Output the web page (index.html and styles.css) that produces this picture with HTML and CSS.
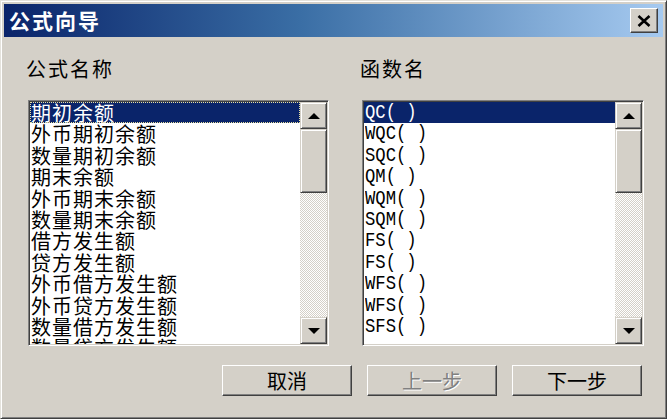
FILE: index.html
```html
<!DOCTYPE html>
<html lang="zh-CN">
<head>
  <meta charset="UTF-8" />
  <title>公式向导</title>
  <link rel="stylesheet" href="styles.css">
</head>
<body>
<div class="window">
  <div class="titlebar">
    <span class="title">公式向导</span>
    <button class="close-btn">
      <svg width="14" height="12" viewBox="0 0 14 12"><path d="M1.5 1 L12.5 11 M12.5 1 L1.5 11" stroke="#000" stroke-width="2.6" fill="none"/></svg>
    </button>
  </div>

  <div class="content">
    <div class="columns">
      <!-- 公式名称 -->
      <div class="group">
        <div class="label">公式名称</div>
        <div class="listbox">
          <ul class="items names">
            <li class="selected focused">期初余额</li>
            <li>外币期初余额</li>
            <li>数量期初余额</li>
            <li>期末余额</li>
            <li>外币期末余额</li>
            <li>数量期末余额</li>
            <li>借方发生额</li>
            <li>贷方发生额</li>
            <li>外币借方发生额</li>
            <li>外币贷方发生额</li>
            <li>数量借方发生额</li>
            <li>数量贷方发生额</li>
          </ul>
          <div class="scrollbar">
            <div class="sb-btn"><span class="arrow-up"></span></div>
            <div class="sb-thumb"></div>
            <div class="sb-track"></div>
            <div class="sb-btn"><span class="arrow-down"></span></div>
          </div>
        </div>
      </div>

      <!-- 函数名 -->
      <div class="group">
        <div class="label">函数名</div>
        <div class="listbox">
          <ul class="items funcs">
            <li class="selected"><span>QC( )</span></li>
            <li><span>WQC( )</span></li>
            <li><span>SQC( )</span></li>
            <li><span>QM( )</span></li>
            <li><span>WQM( )</span></li>
            <li><span>SQM( )</span></li>
            <li><span>FS( )</span></li>
            <li><span>FS( )</span></li>
            <li><span>WFS( )</span></li>
            <li><span>WFS( )</span></li>
            <li><span>SFS( )</span></li>
          </ul>
          <div class="scrollbar">
            <div class="sb-btn"><span class="arrow-up"></span></div>
            <div class="sb-thumb"></div>
            <div class="sb-track"></div>
            <div class="sb-btn"><span class="arrow-down"></span></div>
          </div>
        </div>
      </div>
    </div>

    <div class="buttons">
      <button class="btn">取消</button>
      <button class="btn" disabled>上一步</button>
      <button class="btn">下一步</button>
    </div>
  </div>
</div>
</body>
</html>
```

FILE: styles.css
```css
/* Reset */
* {
  margin: 0;
  padding: 0;
  box-sizing: border-box;
}

html, body {
  width: 667px;
  height: 419px;
  overflow: hidden;
  background: #d4d0c8;
  font-family: "Noto Sans CJK SC", "Noto Sans", sans-serif;
}

/* window frame, classic style */
.window {
  width: 667px;
  height: 419px;
  display: flex;
  flex-direction: column;
  background: #d4d0c8;
  border: 1px solid;
  border-color: #e4e2dc #404040 #404040 #e4e2dc;
  box-shadow: inset 1px 1px #fff, inset -1px -1px #808080;
  padding: 3px 3px 3px 3px;
}

.titlebar {
  height: 33px;
  display: flex;
  align-items: center;
  justify-content: space-between;
  padding: 0 5px 0 5px;
  background: linear-gradient(to right, #0a246a 0%, #3a6ea5 45%, #a6caf0 100%);
}

.title {
  color: #fff;
  font-size: 21px;
  font-weight: bold;
  letter-spacing: 2px;
  line-height: 33px;
}

.close-btn {
  width: 28px;
  height: 25px;
  display: flex;
  align-items: center;
  justify-content: center;
  background: #d4d0c8;
  border: 1px solid;
  border-color: #fff #404040 #404040 #fff;
  box-shadow: inset -1px -1px #808080;
}

.content {
  flex: 1;
  padding: 20px 19px 0 24px;
}

.columns {
  display: grid;
  grid-template-columns: 301px 282px;
  column-gap: 33px;
}

.label {
  font-size: 20px;
  letter-spacing: 2px;
  line-height: 24px;
  margin-left: -2px;
  margin-bottom: 19px;
  color: #000;
}

/* sunken list box */
.listbox {
  height: 246px;
  display: flex;
  background: #fff;
  border: 1px solid;
  border-color: #808080 #fff #fff #808080;
  box-shadow: inset 1px 1px #404040, inset -1px -1px #d4d0c8;
  padding: 1px;
}

.items {
  flex: 1;
  list-style: none;
  overflow: hidden;
  background: #fff;
}

.items li {
  height: 21.4px;
  line-height: 21.4px;
  padding-left: 1px;
  white-space: nowrap;
  color: #000;
}

.names li {
  font-size: 20px;
  letter-spacing: 1px;
}

.funcs li {
  font-family: "Liberation Mono", monospace;
  font-size: 21px;
}

.funcs li span {
  display: inline-block;
  transform: scaleX(0.82);
  transform-origin: left center;
}

.items li.selected {
  background: #0a246a;
  color: #fff;
}

.items li.focused {
  outline: 1px dotted #e8e0a0;
  outline-offset: -1px;
}

/* scrollbar */
.scrollbar {
  width: 27px;
  display: flex;
  flex-direction: column;
}

.sb-btn, .sb-thumb {
  background: #d4d0c8;
  border: 1px solid;
  border-color: #d4d0c8 #404040 #404040 #d4d0c8;
  box-shadow: inset 1px 1px #fff, inset -1px -1px #808080;
}

.sb-btn {
  height: 27px;
  display: flex;
  align-items: center;
  justify-content: center;
}

.sb-thumb {
  height: 64px;
}

.sb-track {
  flex: 1;
  background: repeating-conic-gradient(#d4d0c8 0 25%, #fff 0 50%) 0 0 / 2px 2px;
}

.arrow-up {
  width: 0;
  height: 0;
  border-left: 6px solid transparent;
  border-right: 6px solid transparent;
  border-bottom: 6px solid #000;
}

.arrow-down {
  width: 0;
  height: 0;
  border-left: 6px solid transparent;
  border-right: 6px solid transparent;
  border-top: 6px solid #000;
}

/* bottom buttons */
.buttons {
  display: flex;
  justify-content: flex-end;
  gap: 15px;
  margin-top: 19px;
  padding-right: 2px;
}

.btn {
  width: 130px;
  height: 31px;
  font-family: "Noto Sans CJK SC", sans-serif;
  font-size: 20px;
  color: #000;
  background: #d4d0c8;
  border: 1px solid;
  border-color: #fff #404040 #404040 #fff;
  box-shadow: inset -1px -1px #808080;
}

.btn:disabled {
  color: #808080;
  text-shadow: 1px 1px #fff;
}
```
